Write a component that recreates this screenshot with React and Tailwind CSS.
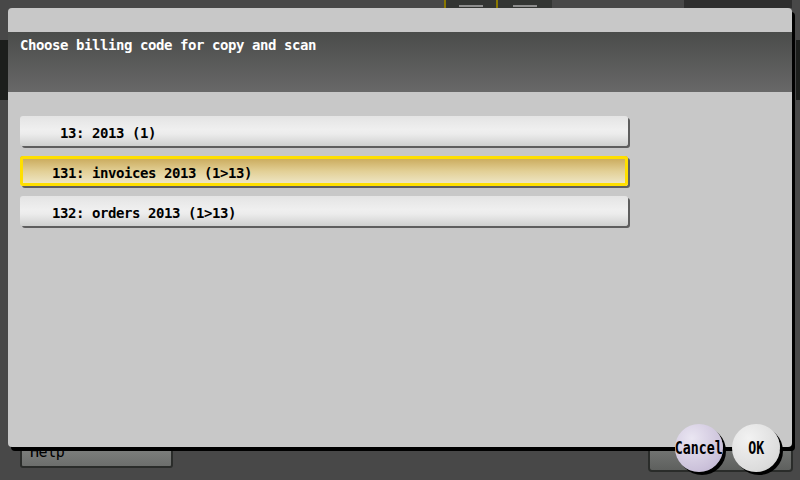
const codes = [
  { code: "13", label: "2013 (1)" },
  { code: "131", label: "invoices 2013 (1>13)", selected: true },
  { code: "132", label: "orders 2013 (1>13)" },
]

const CodeRow = ({ code, label, selected }) => {
  return (
    <div
      className={
        selected
          ? "flex items-center h-[30px] pt-[3px] rounded-[3px] bg-[linear-gradient(#c6a452,#e2cf95_50%,#f1ebcf)] shadow-[inset_0_0_0_3px_#ffdf00,2px_2px_0_#5e5e5e]"
          : "flex items-center h-[30px] pt-[3px] rounded-[3px] bg-[linear-gradient(#e4e4e4,#efefef_45%,#ececec_60%,#cfd0cf)] shadow-[2px_2px_0_#5e5e5e]"
      }
    >
      <span className="w-[64px] text-right">{code}:</span>
      <span className="pl-[8px] whitespace-pre">{label}</span>
    </div>
  )
}

const App = () => {
  return (
    <div className="relative w-[800px] h-[480px] overflow-hidden bg-[#484848] font-['DejaVu_Sans_Mono',monospace] text-[14px] tracking-[-0.43px] leading-4 font-bold text-black">
      {/* screen behind the dialog */}
      <div className="flex flex-col h-full">
        <div className="flex h-2">
          <div className="w-[444px]" />
          <div className="w-[54px] flex justify-center pt-[5px] border-x-2 border-[#8a7800] bg-[#333533]">
            <div className="w-6 h-[2px] bg-[#8e8e8e]" />
          </div>
          <div className="w-[54px] flex justify-center pt-[5px] bg-[#333533]">
            <div className="w-6 h-[2px] bg-[#8e8e8e]" />
          </div>
          <div className="w-[132px]" />
          <div className="w-[108px] bg-[#2e2e2e]" />
        </div>
        <div className="flex justify-between pt-8">
          <div className="w-2 h-[60px] bg-[#1c1e1c]" />
          <div className="w-1 h-[60px] bg-[#1c1e1c]" />
        </div>
        <div className="mt-auto flex justify-between items-end pl-5 pr-[7px] pb-2">
          <div className="mb-1 w-[153px] h-[34px] flex items-end pb-[6px] pl-2 rounded-b-[3px] border-2 border-[#2a2c2a] bg-[linear-gradient(#8a8c8a,#6c6e6c)] text-[15px] font-normal">
            Help
          </div>
          <div className="w-[145px] h-[32px] rounded-b-[4px] border-2 border-[#2a2c2a] bg-[linear-gradient(#7a7c7a,#5e605e)]" />
        </div>
      </div>

      {/* billing code dialog */}
      <div className="absolute left-2 top-2 w-[784px] h-[439px] flex flex-col pt-6 rounded-[4px] bg-[#c8c8c8] shadow-[3px_4px_0_#000]">
        <div className="h-[60px] pt-[5px] pl-3 text-white bg-[linear-gradient(#4a4c4a,#686868)]">
          Choose billing code for copy and scan
        </div>
        <div className="flex flex-col gap-[10px] w-[608px] ml-3 mt-6">
          {codes.map((c) => (
            <CodeRow key={c.code} {...c} />
          ))}
        </div>
      </div>

      {/* round buttons */}
      <div className="absolute right-5 top-[424px] flex gap-[9px] text-[17px] tracking-normal">
        <button className="w-12 h-12 rounded-full flex items-center justify-center whitespace-nowrap bg-[radial-gradient(circle_at_35%_30%,#eae6f2,#cbc1da_70%,#b7accb)] shadow-[3px_3px_0_#000]">
          <span className="inline-block scale-x-[0.78]">Cancel</span>
        </button>
        <button className="w-12 h-12 rounded-full flex items-center justify-center bg-[radial-gradient(circle_at_35%_30%,#f2f2f2,#dcdcdc_70%,#c6c6c6)] shadow-[3px_3px_0_#000]">
          <span className="inline-block scale-x-[0.78]">OK</span>
        </button>
      </div>
    </div>
  )
}

export default App
